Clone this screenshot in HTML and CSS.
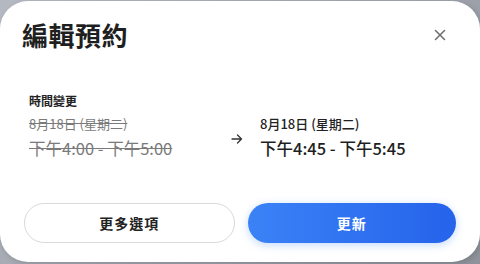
FILE: index.html
```html
<!DOCTYPE html>
<html lang="zh-Hant">
<head>
  <meta charset="UTF-8" />
  <meta name="viewport" content="width=device-width, initial-scale=1.0"/>
  <title>編輯預約</title>
  <link rel="stylesheet" href="styles.css">
</head>
<body>
  <div class="modal">
    <div class="modal-header">
      <h1>編輯預約</h1>
      <button class="close" aria-label="關閉">
        <svg width="12" height="12" viewBox="0 0 12 12">
          <path d="M1.5 1.5 L10.5 10.5 M10.5 1.5 L1.5 10.5" stroke="#6b6b6b" stroke-width="1.5" stroke-linecap="round"/>
        </svg>
      </button>
    </div>

    <div class="change">
      <div class="label">時間變更</div>
      <div class="compare">
        <div class="slot old">
          <div class="date">8月18日 (星期二)</div>
          <div class="time">下午4:00 - 下午5:00</div>
        </div>
        <div class="arrow">
          <svg width="12" height="12" viewBox="0 0 12 12">
            <path d="M1 6 H10.5 M6.5 2 L10.5 6 L6.5 10" stroke="#333" stroke-width="1.3" fill="none" stroke-linecap="round" stroke-linejoin="round"/>
          </svg>
        </div>
        <div class="slot new">
          <div class="date">8月18日 (星期二)</div>
          <div class="time">下午4:45 - 下午5:45</div>
        </div>
      </div>
    </div>

    <div class="actions">
      <button class="btn secondary">更多選項</button>
      <button class="btn primary">更新</button>
    </div>
  </div>
</body>
</html>
```

FILE: styles.css
```css
body {
  margin: 0;
  height: 264px;
  overflow: hidden;
  background: linear-gradient(135deg, #b4b9c2, #8f949c);
  font-family: "Noto Sans CJK TC", sans-serif;
  color: #222;
}
.modal {
  box-sizing: border-box;
  width: 480px;
  height: 261px;
  margin-top: 1px;
  background: #fff;
  border-radius: 28px;
  padding: 16px 24px 0 24px;
  display: flex;
  flex-direction: column;
  box-shadow: 2px 2px 6px rgba(0, 0, 0, 0.15);
}
.modal-header {
  display: flex;
  align-items: center;
  justify-content: space-between;
}
h1 {
  margin: 0 0 0 -2px;
  font-size: 26px;
  line-height: 36px;
  font-weight: 700;
  letter-spacing: 0.5px;
  color: #1f1f1f;
}
.close {
  border: none;
  background: none;
  padding: 0;
  width: 12px;
  height: 12px;
  margin-right: 10px;
  display: flex;
  cursor: pointer;
}
.change {
  margin-top: 40px;
  padding-left: 5px;
}
.label {
  font-size: 12px;
  font-weight: 700;
  line-height: 16px;
  color: #222;
}
.compare {
  display: flex;
  align-items: center;
  margin-top: 6px;
}
.slot .date {
  font-size: 13px;
  line-height: 18px;
}
.slot .time {
  font-size: 16.5px;
  line-height: 24px;
  margin-top: 3px;
}
.old {
  width: 202px;
  color: #7a7a7a;
  text-decoration: line-through;
}
.new .date {
  font-weight: 500;
  color: #222;
}
.new .time {
  font-weight: 500;
  color: #1f1f1f;
}
.arrow {
  width: 29px;
  display: flex;
  margin-top: 2px;
}
.actions {
  display: flex;
  gap: 13px;
  margin-top: auto;
  margin-bottom: 19px;
}
.btn {
  flex: 1;
  height: 40px;
  border-radius: 20px;
  font-family: "Noto Sans CJK TC", sans-serif;
  font-size: 14px;
  font-weight: 700;
  letter-spacing: 1px;
  cursor: pointer;
}
.secondary {
  background: #fff;
  border: 1px solid #d9d9d9;
  color: #222;
}
.primary {
  border: none;
  color: #fff;
  background: linear-gradient(90deg, #3b82f6, #2563eb);
  box-shadow: 0 2px 8px rgba(59, 130, 246, 0.3);
}
```
